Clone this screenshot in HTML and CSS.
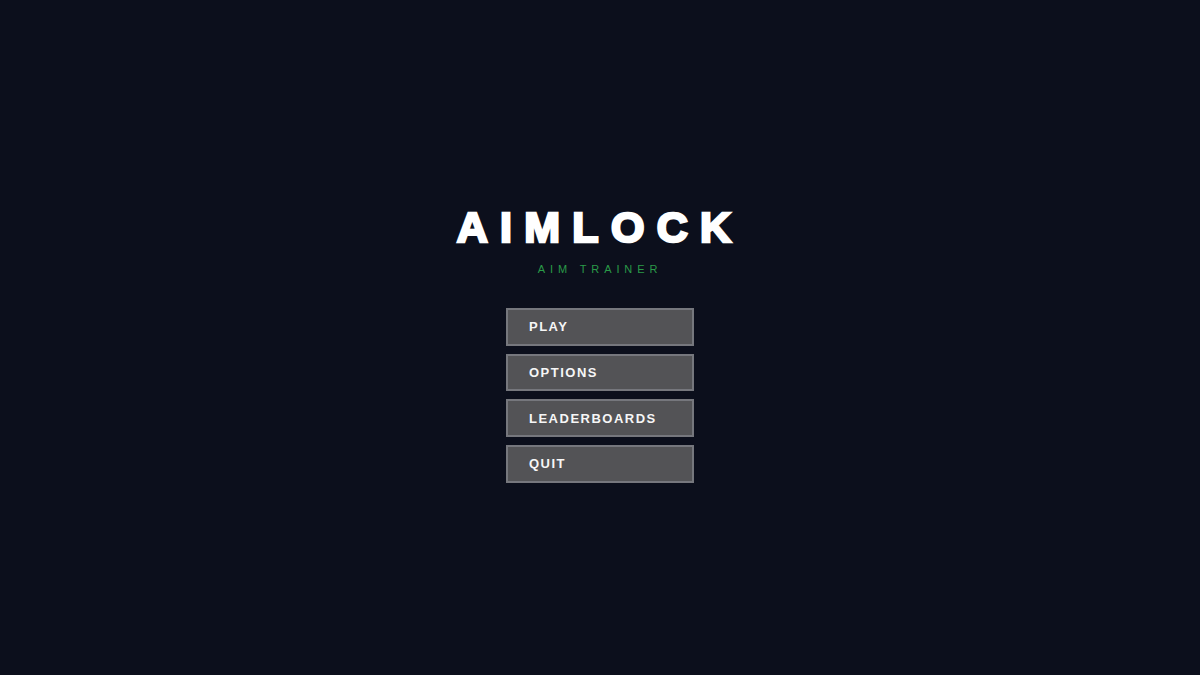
FILE: index.html
```html
<!DOCTYPE html>
<html>
<head>
<meta charset="utf-8">
<link rel="stylesheet" href="styles.css">
</head>
<body>
<main class="menu">
  <h1 class="title">AIMLOCK</h1>
  <p class="subtitle">AIM TRAINER</p>
  <nav class="buttons">
    <button class="btn">PLAY</button>
    <button class="btn">OPTIONS</button>
    <button class="btn">LEADERBOARDS</button>
    <button class="btn">QUIT</button>
  </nav>
</main>
</body>
</html>
```

FILE: styles.css
```css
html, body {
  margin: 0;
  padding: 0;
  background: #0c0f1c;
  height: 100%;
}
body {
  font-family: "Liberation Sans", Arial, sans-serif;
}
.menu {
  display: flex;
  flex-direction: column;
  align-items: center;
  padding-top: 206px;
}
.title {
  margin: 0;
  font-size: 43px;
  line-height: 43px;
  font-weight: 700;
  color: #ffffff;
  -webkit-text-stroke: 2.6px #ffffff;
  letter-spacing: 12.3px;
  padding-left: 0;
}
.subtitle {
  margin: 15px 0 0;
  font-size: 11px;
  line-height: 11px;
  color: #2a9a48;
  letter-spacing: 4.9px;
  padding-left: 0;
}
.buttons {
  margin-top: 33px;
  display: flex;
  flex-direction: column;
  gap: 8.2px;
}
.btn {
  box-sizing: border-box;
  width: 188px;
  height: 37.5px;
  margin: 0;
  padding: 0 0 0 21px;
  display: flex;
  align-items: center;
  background: #535356;
  border: 2px solid #76777d;
  color: #f6f6f6;
  font-family: "Liberation Sans", Arial, sans-serif;
  font-size: 13px;
  font-weight: 700;
  letter-spacing: 1.5px;
  text-align: left;
  cursor: pointer;
}
```
